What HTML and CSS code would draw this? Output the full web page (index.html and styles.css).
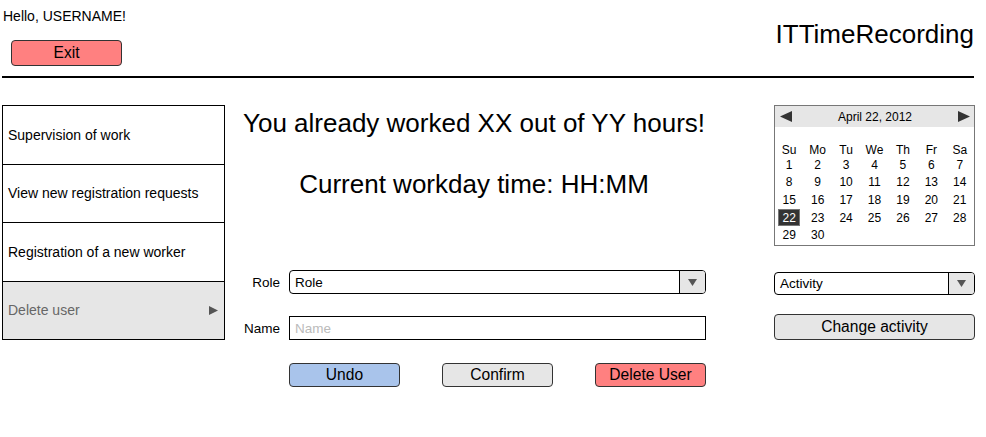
FILE: index.html
```html
<!DOCTYPE html>
<html lang="en">
<head>
<meta charset="utf-8">
<title>ITTimeRecording</title>
<link rel="stylesheet" href="styles.css">
</head>
<body>
<header class="top">
  <div class="greet">
    <div class="hello">Hello, USERNAME!</div>
    <button class="btn btn-red exit">Exit</button>
  </div>
  <div class="app-title">ITTimeRecording</div>
</header>
<div class="main">
  <nav class="menu">
    <div class="item">Supervision of work</div>
    <div class="item">View new registration requests</div>
    <div class="item">Registration of a new worker</div>
    <div class="item active"><span>Delete user</span>
      <svg class="tri-right" width="9" height="9" viewBox="0 0 9 9"><polygon points="0,0 9,4.5 0,9" fill="#555"/></svg>
    </div>
  </nav>
  <section class="center">
    <h1 class="h-worked">You already worked XX out of YY hours!</h1>
    <h2 class="h-time">Current workday time: HH:MM</h2>
    <div class="form">
      <div class="lbl">Role</div>
      <div class="select">
        <div class="val">Role</div>
        <div class="arrow"><svg width="9" height="7" viewBox="0 0 9 7"><polygon points="0,0 9,0 4.5,7" fill="#555"/></svg></div>
      </div>
      <div class="lbl">Name</div>
      <div class="input">Name</div>
    </div>
    <div class="actions">
      <button class="btn btn-blue act">Undo</button>
      <button class="btn btn-gray act">Confirm</button>
      <button class="btn btn-red act">Delete User</button>
    </div>
  </section>
  <aside class="side">
    <div class="cal">
      <div class="cal-head">
        <svg width="12" height="11" viewBox="0 0 12 11"><polygon points="12,0 12,11 0,5.5" fill="#333"/></svg>
        <span class="cal-title">April 22, 2012</span>
        <svg width="12" height="11" viewBox="0 0 12 11"><polygon points="0,0 12,5.5 0,11" fill="#333"/></svg>
      </div>
      <div class="cal-grid">
        <span>Su</span><span>Mo</span><span>Tu</span><span>We</span><span>Th</span><span>Fr</span><span>Sa</span>
        <span>1</span><span>2</span><span>3</span><span>4</span><span>5</span><span>6</span><span>7</span>
        <span>8</span><span>9</span><span>10</span><span>11</span><span>12</span><span>13</span><span>14</span>
        <span>15</span><span>16</span><span>17</span><span>18</span><span>19</span><span>20</span><span>21</span>
        <span><b class="sel">22</b></span><span>23</span><span>24</span><span>25</span><span>26</span><span>27</span><span>28</span>
        <span>29</span><span>30</span>
      </div>
    </div>
    <div class="select activity">
      <div class="val">Activity</div>
      <div class="arrow"><svg width="9" height="7" viewBox="0 0 9 7"><polygon points="0,0 9,0 4.5,7" fill="#555"/></svg></div>
    </div>
    <button class="btn btn-gray change">Change activity</button>
  </aside>
</div>
</body>
</html>
```
FILE: styles.css
```css
* { box-sizing: border-box; }
body {
  margin: 0;
  font-family: "Liberation Sans", Arial, sans-serif;
  color: #000;
  background: #fff;
}
.top {
  margin-left: 2px;
  width: 972px;
  height: 78px;
  border-bottom: 2px solid #000;
  display: flex;
  justify-content: space-between;
}
.greet { padding-left: 1px; padding-top: 8px; }
.hello { font-size: 14px; line-height: 16px; }
.btn {
  font-family: inherit;
  font-size: 15.6px;
  color: #000;
  border: 1px solid #333;
  border-radius: 4px;
  padding: 0;
  display: flex;
  align-items: center;
  justify-content: center;
}
.btn-red { background: #ff8080; }
.btn-blue { background: #a9c4eb; }
.btn-gray { background: #e6e6e6; }
.exit { margin-top: 16px; margin-left: 8px; width: 111px; height: 26px; }
.app-title { font-size: 26px; line-height: 30px; padding-top: 19px; padding-right: 0; }

.main { display: flex; margin-top: 27px; margin-left: 2px; }
.menu {
  width: 223px;
  height: 235px;
  border: 1px solid #000;
  display: flex;
  flex-direction: column;
}
.item {
  flex: 1;
  display: flex;
  align-items: center;
  padding-left: 5px;
  font-size: 14px;
}
.item + .item { border-top: 1px solid #000; }
.item.active {
  background: #e6e6e6;
  color: #666;
  justify-content: space-between;
  padding-right: 6px;
}

.center { width: 464px; margin-left: 17px; }
.h-worked, .h-time {
  font-size: 26px;
  font-weight: normal;
  line-height: 30px;
  text-align: center;
  white-space: nowrap;
}
.h-worked { margin: 3px 0 0; }
.h-time { margin: 31px 0 0; }
.form {
  display: grid;
  grid-template-columns: 38px 417px;
  column-gap: 9px;
  row-gap: 22px;
  margin-top: 71px;
}
.lbl { font-size: 13.5px; text-align: right; align-self: center; }
.select {
  height: 24px;
  border: 1px solid #000;
  border-radius: 4px;
  display: flex;
  font-size: 13.5px;
  background: #fff;
}
.select .val { flex: 1; padding-left: 5px; display: flex; align-items: center; }
.select .arrow {
  width: 26px;
  border-left: 1px solid #000;
  background: #e6e6e6;
  border-radius: 0 3px 3px 0;
  display: flex;
  align-items: center;
  justify-content: center;
}
.input {
  height: 24px;
  border: 1px solid #000;
  padding-left: 5px;
  color: #bbb;
  font-size: 13.5px;
  display: flex;
  align-items: center;
}
.actions {
  display: flex;
  justify-content: space-between;
  margin-left: 47px;
  margin-top: 23px;
}
.act { width: 111px; height: 24px; }

.side { width: 201px; margin-left: 68px; }
.cal { height: 141px; border: 1px solid #777; }
.cal-head {
  height: 21px;
  background: #e6e6e6;
  display: flex;
  justify-content: space-between;
  align-items: center;
  padding: 0 4px 0 5px;
  font-size: 12px;
}
.cal-grid {
  display: grid;
  grid-template-columns: repeat(7, 1fr);
  grid-template-rows: 13px repeat(5, 17.6px);
  margin-top: 16px;
  font-size: 12px;
}
.cal-grid span { display: flex; align-items: center; justify-content: center; }
.sel {
  font-weight: normal;
  display: flex;
  align-items: center;
  justify-content: center;
  width: 22px;
  height: 17px;
  background: #333;
  color: #fff;
  border: 1px solid #777;
}
.activity { margin-top: 26px; height: 23px; }
.change { margin-top: 19px; width: 201px; height: 26px; }
```
